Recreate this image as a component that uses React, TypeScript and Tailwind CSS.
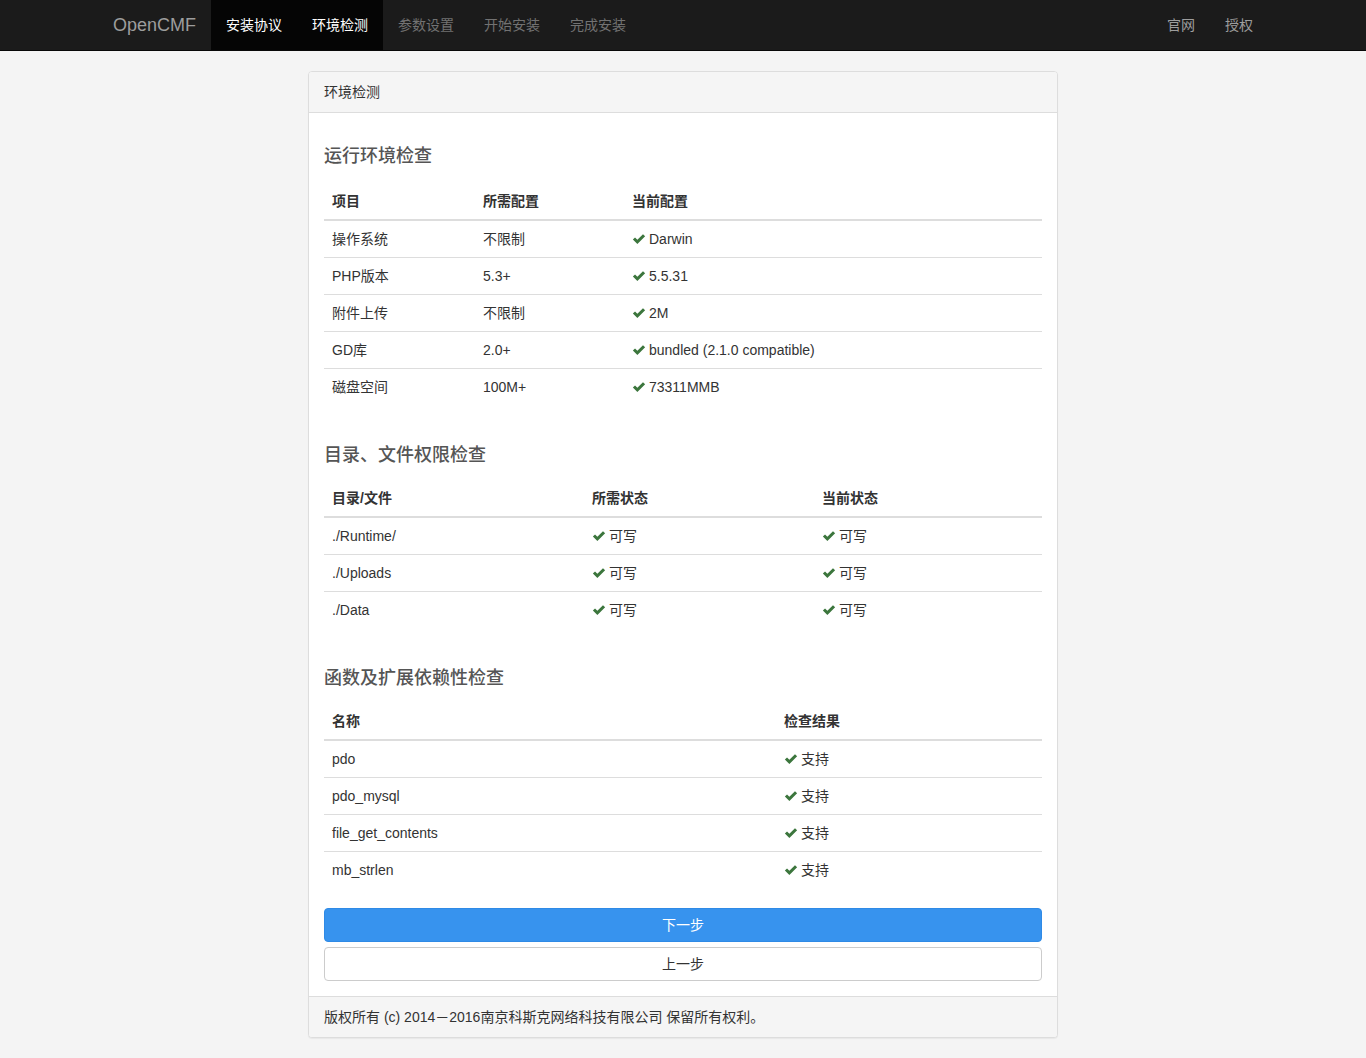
import React from "react";

const font = { fontFamily: '"Liberation Sans", Arial, "Noto Sans CJK SC", sans-serif' };

function Check() {
  return (
    <svg width="14" height="12" viewBox="0 0 13 11" className="inline-block mr-[3px] -mt-[2px] align-middle">
      <path d="M0.8 6 L2.8 4 L5 6.2 L10.2 1 L12.2 3 L5 10.2 Z" fill="#3c763d" />
    </svg>
  );
}

function Ok({ text }: { text: string }) {
  return (
    <span>
      <Check />
      {text}
    </span>
  );
}

type Row = React.ReactNode[];

function DataTable({
  headers,
  widths,
  rows,
  mb,
}: {
  headers: string[];
  widths: string[];
  rows: Row[];
  mb: string;
}) {
  return (
    <table className={`w-full border-collapse text-[14px] text-[#333] ${mb}`}>
      <thead>
        <tr>
          {headers.map((h, i) => (
            <th
              key={i}
              className={`text-left font-bold px-[8px] py-[8px] leading-[20px] border-b-2 border-[#ddd] ${widths[i]}`}
            >
              {h}
            </th>
          ))}
        </tr>
      </thead>
      <tbody>
        {rows.map((r, ri) => (
          <tr key={ri}>
            {r.map((c, ci) => (
              <td
                key={ci}
                className={`px-[8px] py-[8px] leading-[20px] ${ri > 0 ? "border-t border-[#ddd]" : ""}`}
              >
                {c}
              </td>
            ))}
          </tr>
        ))}
      </tbody>
    </table>
  );
}

function H3({ children, first }: { children: React.ReactNode; first?: boolean }) {
  return (
    <h3
      className={`text-[18px] leading-[20px] text-[#555] font-medium ${
        first ? "mt-[18px] mb-[17px]" : "mt-[20px] mb-[15px]"
      }`}
    >
      {children}
    </h3>
  );
}

export default function App() {
  return (
    <div style={font} className="min-h-[1058px] bg-[#f4f4f4] text-[14px] text-[#333] pb-[20px]">
      <nav className="h-[51px] bg-[#1b1b1b] border-b border-[#080808]">
        <div className="w-[1170px] mx-auto px-[15px] flex h-[50px]">
          <div className="-ml-[15px] px-[15px] h-[50px] flex items-center text-[18px] text-[#9d9d9d]">OpenCMF</div>
          <ul className="flex h-[50px]">
            <li className="px-[15px] flex items-center bg-[#050505] text-white">安装协议</li>
            <li className="px-[15px] flex items-center bg-[#050505] text-white">环境检测</li>
            <li className="px-[15px] flex items-center text-[#727272]">参数设置</li>
            <li className="px-[15px] flex items-center text-[#727272]">开始安装</li>
            <li className="px-[15px] flex items-center text-[#727272]">完成安装</li>
          </ul>
          <ul className="flex h-[50px] ml-auto -mr-[15px]">
            <li className="px-[15px] flex items-center text-[#9d9d9d]">官网</li>
            <li className="px-[15px] flex items-center text-[#9d9d9d]">授权</li>
          </ul>
        </div>
      </nav>

      <div className="w-[750px] ml-[308px] mt-[20px] bg-white border border-[#ddd] rounded-[4px] shadow-[0_1px_1px_rgba(0,0,0,0.05)]">
        <div className="bg-[#f5f5f5] border-b border-[#ddd] px-[15px] py-[10px] leading-[20px] rounded-t-[3px]">环境检测</div>
        <div className="px-[15px] pt-[15px] pb-[15px]">
          <H3 first>运行环境检查</H3>
          <DataTable
            mb="mb-[40px]"
            headers={["项目", "所需配置", "当前配置"]}
            widths={["w-[151px]", "w-[149px]", ""]}
            rows={[
              ["操作系统", "不限制", <Ok text="Darwin" />],
              ["PHP版本", "5.3+", <Ok text="5.5.31" />],
              ["附件上传", "不限制", <Ok text="2M" />],
              ["GD库", "2.0+", <Ok text="bundled (2.1.0 compatible)" />],
              ["磁盘空间", "100M+", <Ok text="73311MMB" />],
            ]}
          />
          <H3>目录、文件权限检查</H3>
          <DataTable
            mb="mb-[40px]"
            headers={["目录/文件", "所需状态", "当前状态"]}
            widths={["w-[260px]", "w-[230px]", ""]}
            rows={[
              ["./Runtime/", <Ok text="可写" />, <Ok text="可写" />],
              ["./Uploads", <Ok text="可写" />, <Ok text="可写" />],
              ["./Data", <Ok text="可写" />, <Ok text="可写" />],
            ]}
          />
          <H3>函数及扩展依赖性检查</H3>
          <DataTable
            mb="mb-[20px]"
            headers={["名称", "检查结果"]}
            widths={["w-[452px]", ""]}
            rows={[
              ["pdo", <Ok text="支持" />],
              ["pdo_mysql", <Ok text="支持" />],
              ["file_get_contents", <Ok text="支持" />],
              ["mb_strlen", <Ok text="支持" />],
            ]}
          />
          <button className="block w-full h-[34px] leading-[20px] bg-[#3793ee] border border-[#2f8ae6] text-white rounded-[4px] text-[14px]">
            下一步
          </button>
          <button className="block w-full h-[34px] mt-[5px] leading-[20px] bg-white border border-[#ccc] text-[#333] rounded-[4px] text-[14px]">
            上一步
          </button>
        </div>
        <div className="bg-[#f5f5f5] border-t border-[#ddd] px-[15px] py-[10px] leading-[20px] rounded-b-[3px]">
          版权所有 (c) 2014－2016南京科斯克网络科技有限公司 保留所有权利。
        </div>
      </div>
    </div>
  );
}
